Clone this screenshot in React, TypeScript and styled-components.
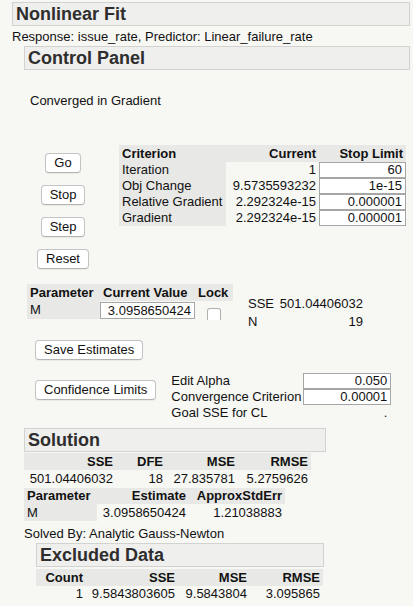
import React from "react";
import styled, { createGlobalStyle } from "styled-components";

const Global = createGlobalStyle`
  html, body { margin: 0; padding: 0; background: #f7f7f4; }
  body { font-family: "Liberation Sans", Arial, sans-serif; font-size: 13px; color: #111; }
`;

const Page = styled.div`
  padding: 2px 3px 0 12px;
  display: flex;
  flex-direction: column;
  align-items: flex-start;
`;

const TitleBox = styled.div<{ $indent?: number; $width?: number }>`
  box-sizing: border-box;
  margin-left: ${(p) => p.$indent ?? 0}px;
  width: ${(p) => (p.$width ? `${p.$width}px` : `calc(100% - ${p.$indent ?? 0}px)`)};
  height: 24px;
  padding-left: 3px;
  background: #efefed;
  border: 1px solid #d2d2d0;
  font-weight: bold;
  font-size: 18px;
  line-height: 22px;
  color: #2e2e2e;
`;

const Line = styled.div<{ $mt?: number; $ml?: number }>`
  line-height: 17px;
  margin-top: ${(p) => p.$mt ?? 0}px;
  margin-left: ${(p) => p.$ml ?? 0}px;
  white-space: nowrap;
`;

const Section = styled.div`
  display: flex;
  flex-direction: column;
  align-items: flex-start;
  padding-left: 15px;
`;

const ControlRow = styled.div`
  display: flex;
  align-items: flex-start;
  margin-top: 36px;
  margin-left: 2px;
  gap: 22px;
`;

const ButtonCol = styled.div`
  width: 68px;
  padding-top: 8px;
  display: flex;
  flex-direction: column;
  align-items: center;
  gap: 12px;
`;

const Button = styled.button<{ $mt?: number; $ml?: number }>`
  box-sizing: border-box;
  height: 20px;
  padding: 0 8px;
  margin-top: ${(p) => p.$mt ?? 0}px;
  margin-left: ${(p) => p.$ml ?? 0}px;
  font-family: "Liberation Sans", Arial, sans-serif;
  font-size: 13px;
  line-height: 18px;
  color: #111;
  background: #ffffff;
  border: 1px solid #c4c4c4;
  border-bottom-color: #b4b4b4;
  border-radius: 4px;
  box-shadow: 0 1px 1px rgba(0, 0, 0, 0.06);
  white-space: nowrap;
`;

const Grid = styled.div<{ $cols: string }>`
  display: grid;
  grid-template-columns: ${(p) => p.$cols};
`;

const Cell = styled.div<{ $gray?: boolean; $bold?: boolean; $right?: boolean; $h?: number }>`
  height: ${(p) => p.$h ?? 16}px;
  line-height: ${(p) => p.$h ?? 16}px;
  padding: 0 3px;
  background: ${(p) => (p.$gray ? "#e8e8e6" : "transparent")};
  font-weight: ${(p) => (p.$bold ? "bold" : "normal")};
  text-align: ${(p) => (p.$right ? "right" : "left")};
  white-space: nowrap;
`;

const InputCell = styled.div<{ $h?: number }>`
  box-sizing: border-box;
  height: ${(p) => p.$h ?? 16}px;
  line-height: ${(p) => (p.$h ?? 16) - 2}px;
  padding: 0 3px;
  background: #ffffff;
  border: 1px solid #a6a6a6;
  text-align: right;
  white-space: nowrap;
`;

const ParamRow = styled.div`
  display: flex;
  align-items: flex-start;
  gap: 15px;
  margin-top: 15px;
`;

const LockCell = styled.div`
  height: 18px;
  display: flex;
  justify-content: center;
  align-items: flex-end;
`;

const CheckBox = styled.div`
  box-sizing: border-box;
  width: 14px;
  height: 12px;
  margin-bottom: -1px;
  background: #ffffff;
  border: 1px solid #b0b0b0;
  border-bottom: none;
  border-radius: 3px 3px 0 0;
`;

const Stats = styled.div`
  margin-top: 11px;
  display: grid;
  grid-template-columns: 31px 84px;
  line-height: 18px;
`;

const Right = styled.div`
  text-align: right;
`;

const ConfRow = styled.div`
  display: flex;
  align-items: flex-start;
  gap: 15px;
  margin-top: 13px;
`;

const Options = styled.div`
  display: grid;
  grid-template-columns: 132px 88px;
`;

const OptLabel = styled.div`
  height: 16px;
  line-height: 16px;
  white-space: nowrap;
`;

const Dot = styled.div`
  height: 16px;
  line-height: 16px;
  text-align: right;
  padding-right: 4px;
`;

export default function App() {
  return (
    <>
      <Global />
      <Page>
        <TitleBox>Nonlinear Fit</TitleBox>
        <Line $mt={2}>Response: issue_rate, Predictor: Linear_failure_rate</Line>
        <TitleBox $indent={12} style={{ marginTop: 1 }}>Control Panel</TitleBox>
        <Section>
          <Line $mt={22} $ml={3}>Converged in Gradient</Line>
          <ControlRow>
            <ButtonCol>
              <Button>Go</Button>
              <Button>Stop</Button>
              <Button>Step</Button>
              <Button>Reset</Button>
            </ButtonCol>
            <Grid $cols="107px 93px 87px">
              <Cell $gray $bold $h={17}>Criterion</Cell>
              <Cell $gray $bold $right $h={17}>Current</Cell>
              <Cell $gray $bold $right $h={17}>Stop Limit</Cell>
              <Cell $gray>Iteration</Cell>
              <Cell $right>1</Cell>
              <InputCell>60</InputCell>
              <Cell $gray>Obj Change</Cell>
              <Cell $right>9.5735593232</Cell>
              <InputCell>1e-15</InputCell>
              <Cell $gray>Relative Gradient</Cell>
              <Cell $right>2.292324e-15</Cell>
              <InputCell>0.000001</InputCell>
              <Cell $gray>Gradient</Cell>
              <Cell $right>2.292324e-15</Cell>
              <InputCell>0.000001</InputCell>
            </Grid>
          </ControlRow>
          <ParamRow>
            <Grid $cols="73px 95px 38px">
              <Cell $gray $bold $h={17}>Parameter</Cell>
              <Cell $gray $bold $h={17}>Current Value</Cell>
              <Cell $gray $bold $h={17}>Lock</Cell>
              <Cell $gray $h={18}>M</Cell>
              <InputCell $h={17} style={{ marginTop: 1 }}>3.0958650424</InputCell>
              <LockCell>
                <CheckBox />
              </LockCell>
            </Grid>
            <Stats>
              <div>SSE</div>
              <Right>501.04406032</Right>
              <div>N</div>
              <Right>19</Right>
            </Stats>
          </ParamRow>
          <Button $mt={9} $ml={8}>Save Estimates</Button>
          <ConfRow>
            <Button $mt={7} $ml={8}>Confidence Limits</Button>
            <Options>
              <OptLabel>Edit Alpha</OptLabel>
              <InputCell>0.050</InputCell>
              <OptLabel>Convergence Criterion</OptLabel>
              <InputCell>0.00001</InputCell>
              <OptLabel>Goal SSE for CL</OptLabel>
              <Dot>.</Dot>
            </Options>
          </ConfRow>
        </Section>
        <TitleBox $indent={12} $width={302} style={{ marginTop: 7 }}>Solution</TitleBox>
        <Grid $cols="92px 50px 72px 73px" style={{ marginLeft: 12, marginTop: 1 }}>
          <Cell $gray $bold $right $h={17}>SSE</Cell>
          <Cell $gray $bold $right $h={17}>DFE</Cell>
          <Cell $gray $bold $right $h={17}>MSE</Cell>
          <Cell $gray $bold $right $h={17}>RMSE</Cell>
          <Cell $right $h={17}>501.04406032</Cell>
          <Cell $right $h={17}>18</Cell>
          <Cell $right $h={17}>27.835781</Cell>
          <Cell $right $h={17}>5.2759626</Cell>
        </Grid>
        <Grid $cols="73px 92px 96px" style={{ marginLeft: 12, marginTop: 1 }}>
          <Cell $gray $bold $h={16}>Parameter</Cell>
          <Cell $gray $bold $right $h={16}>Estimate</Cell>
          <Cell $gray $bold $right $h={16}>ApproxStdErr</Cell>
          <Cell $gray $h={17}>M</Cell>
          <Cell $right $h={17}>3.0958650424</Cell>
          <Cell $right $h={17}>1.21038883</Cell>
        </Grid>
        <Line $mt={4} $ml={12}>Solved By: Analytic Gauss-Newton</Line>
        <TitleBox $indent={24} $width={288} style={{ marginTop: 1 }}>Excluded Data</TitleBox>
        <Grid $cols="50px 92px 72px 73px" style={{ marginLeft: 24, marginTop: 2 }}>
          <Cell $gray $bold $right $h={17}>Count</Cell>
          <Cell $gray $bold $right $h={17}>SSE</Cell>
          <Cell $gray $bold $right $h={17}>MSE</Cell>
          <Cell $gray $bold $right $h={17}>RMSE</Cell>
          <Cell $right $h={16}>1</Cell>
          <Cell $right $h={16}>9.5843803605</Cell>
          <Cell $right $h={16}>9.5843804</Cell>
          <Cell $right $h={16}>3.095865</Cell>
        </Grid>
      </Page>
    </>
  );
}
